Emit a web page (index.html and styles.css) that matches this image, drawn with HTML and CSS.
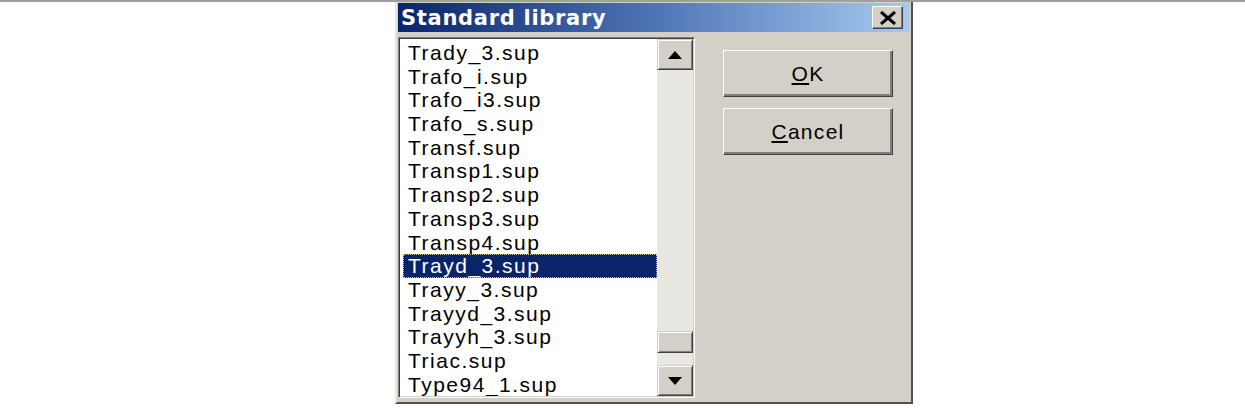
FILE: index.html
```html
<!DOCTYPE html>
<html lang="en">
  <head>
    <meta charset="UTF-8" />
    <meta name="viewport" content="width=device-width, initial-scale=1.0" />
    <title>Standard library</title>
    <link rel="stylesheet" href="styles.css">
  </head>
  <body>
    <div class="rule"></div>

    <div class="dialog">
      <div class="titlebar">
        <span class="title">Standard library</span>
        <button class="close" type="button" aria-label="Close">
          <svg width="18" height="14" viewBox="0 0 18 14">
            <path d="M2 1 L16 13 M16 1 L2 13" stroke="#000" stroke-width="3" />
          </svg>
        </button>
      </div>

      <div class="content">
        <div class="listbox">
          <ul class="items">
            <li>Trady_3.sup</li>
            <li>Trafo_i.sup</li>
            <li>Trafo_i3.sup</li>
            <li>Trafo_s.sup</li>
            <li>Transf.sup</li>
            <li>Transp1.sup</li>
            <li>Transp2.sup</li>
            <li>Transp3.sup</li>
            <li>Transp4.sup</li>
            <li class="selected">Trayd_3.sup</li>
            <li>Trayy_3.sup</li>
            <li>Trayyd_3.sup</li>
            <li>Trayyh_3.sup</li>
            <li>Triac.sup</li>
            <li>Type94_1.sup</li>
          </ul>
          <div class="scrollbar">
            <div class="arrow">
              <svg width="14" height="8" viewBox="0 0 14 8"><path d="M7 0 L14 8 L0 8 Z" fill="#000" /></svg>
            </div>
            <div class="track"></div>
            <div class="thumb"></div>
            <div class="track short"></div>
            <div class="arrow">
              <svg width="14" height="8" viewBox="0 0 14 8"><path d="M0 0 L14 0 L7 8 Z" fill="#000" /></svg>
            </div>
          </div>
        </div>

        <div class="buttons">
          <button class="btn" type="button"><u>O</u>K</button>
          <button class="btn" type="button"><u>C</u>ancel</button>
        </div>
      </div>
    </div>
  </body>
</html>
```

FILE: styles.css
```css
body {
  margin: 0;
  background-color: #ffffff;
  font-family: "Liberation Sans", Arial, sans-serif;
}

.rule {
  height: 2px;
  background-color: #a0a0a0;
}

.dialog {
  box-sizing: border-box;
  width: 518px;
  height: 402px;
  margin-left: 395px;
  padding: 1px 1px 0 1px;
  background-color: #d4d0c8;
  border-left: 2px solid #e8e6e0;
  border-right: 2px solid #505050;
  border-bottom: 2px solid #505050;
}

.titlebar {
  display: flex;
  align-items: center;
  justify-content: space-between;
  height: 29px;
  padding-left: 3px;
  background: linear-gradient(to right, #0a246a, #4f74b6 50%, #a6caf0);
}

.title {
  color: #ffffff;
  font-family: "DejaVu Sans", Verdana, sans-serif;
  font-weight: bold;
  font-size: 21px;
  letter-spacing: 0.7px;
}

.close {
  display: flex;
  align-items: center;
  justify-content: center;
  width: 31px;
  height: 23px;
  margin-right: 7px;
  padding: 0;
  background-color: #d4d0c8;
  border: 1px solid;
  border-color: #ffffff #404040 #404040 #ffffff;
  box-shadow: inset -1px -1px 0 #808080;
}

.content {
  display: flex;
  align-items: flex-start;
}

.listbox {
  display: flex;
  box-sizing: border-box;
  width: 297px;
  height: 361px;
  margin-top: 5px;
  background-color: #ffffff;
  border: 1px solid;
  border-color: #808080 #ffffff #ffffff #808080;
  box-shadow: inset 1px 1px 0 #404040, inset -1px -1px 0 #d4d0c8;
  padding: 1px;
}

.items {
  flex: 1;
  margin: 0;
  padding: 2px 0 0 3px;
  list-style: none;
  overflow: hidden;
}

.items li {
  height: 23.7px;
  line-height: 23.7px;
  padding-left: 5px;
  font-size: 21px;
  letter-spacing: 1.5px;
  color: #000000;
  white-space: nowrap;
}

.items li.selected {
  background-color: #0a246a;
  color: #ffffff;
  outline: 1px dotted #c8c4a0;
  outline-offset: -1px;
}

.scrollbar {
  display: flex;
  flex-direction: column;
  width: 36px;
  background-color: #e9e7e2;
}

.arrow,
.thumb {
  display: flex;
  align-items: center;
  justify-content: center;
  box-sizing: border-box;
  background-color: #d4d0c8;
  border: 1px solid;
  border-color: #d4d0c8 #404040 #404040 #d4d0c8;
  box-shadow: inset 1px 1px 0 #ffffff, inset -1px -1px 0 #808080;
}

.arrow {
  height: 31px;
}

.thumb {
  height: 22px;
}

.track {
  flex: 1;
}

.track.short {
  flex: 0 0 12px;
}

.buttons {
  display: flex;
  flex-direction: column;
  gap: 11px;
  margin-top: 18px;
  margin-left: 28px;
}

.btn {
  box-sizing: border-box;
  width: 170px;
  height: 47px;
  padding: 0;
  font-family: "Liberation Sans", Arial, sans-serif;
  font-size: 21px;
  letter-spacing: 1.3px;
  color: #000000;
  background-color: #d4d0c8;
  border: 1px solid;
  border-color: #ffffff #404040 #404040 #ffffff;
  box-shadow: inset -2px -2px 0 #808080;
}
```
